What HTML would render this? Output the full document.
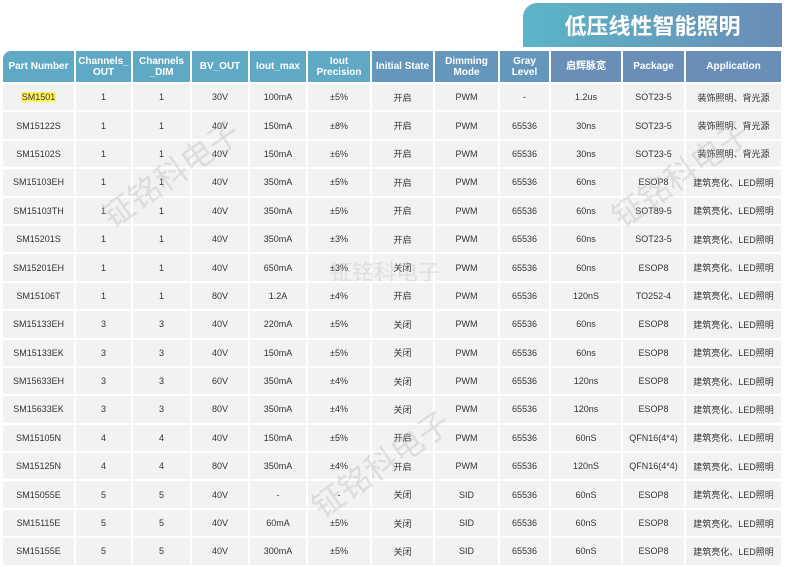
<!DOCTYPE html>
<html><head><meta charset="utf-8"><style>
body{margin:0;width:787px;height:566px;background:#fff;overflow:hidden;position:relative;font-family:"Liberation Sans","Noto Sans CJK SC",sans-serif;}
.title{position:absolute;left:523px;top:3px;width:259px;height:44px;border-radius:14px 0 0 0;background:linear-gradient(90deg,#5bb5c7,#6a8db6);color:#fff;font:bold 22px "Noto Sans CJK SC",sans-serif;line-height:44px;text-align:center;}
table{position:absolute;left:1px;top:49px;border-collapse:separate;border-spacing:2px;table-layout:fixed;}
th{height:31px;padding:0;color:#fff;font-size:10px;font-weight:bold;line-height:11px;background:#5fa9c4;}
td{height:26.4px;padding:0;background:#f1f2f2;font-size:9px;color:#333;text-align:center;}
th:nth-child(n+7){background:#6497bb}
th:nth-child(n+10){background:#6a8fb7}
th:first-child{border-radius:8px 0 0 0}
.hl{background:#fff35a;padding:0 1px}
.wm{position:absolute;color:rgba(180,180,180,.35);font:32px "Noto Sans CJK SC",sans-serif;transform:rotate(-35deg);pointer-events:none}
</style></head><body>
<div class="title">低压线性智能照明</div>
<table>
<colgroup><col style="width:71px"><col style="width:55px"><col style="width:57px"><col style="width:56px"><col style="width:56px"><col style="width:62px"><col style="width:61px"><col style="width:63px"><col style="width:49px"><col style="width:70px"><col style="width:61px"><col style="width:95px"></colgroup>
<tr><th>Part Number</th><th>Channels_<br>OUT</th><th>Channels<br>_DIM</th><th>BV_OUT</th><th>Iout_max</th><th>Iout<br>Precision</th><th>Initial State</th><th>Dimming<br>Mode</th><th>Gray<br>Level</th><th>启辉脉宽</th><th>Package</th><th>Application</th></tr>
<tr><td><span class="hl">SM1501</span></td><td>1</td><td>1</td><td>30V</td><td>100mA</td><td>±5%</td><td>开启</td><td>PWM</td><td>-</td><td>1.2us</td><td>SOT23-5</td><td>装饰照明、背光源</td></tr>
<tr><td>SM15122S</td><td>1</td><td>1</td><td>40V</td><td>150mA</td><td>±8%</td><td>开启</td><td>PWM</td><td>65536</td><td>30ns</td><td>SOT23-5</td><td>装饰照明、背光源</td></tr>
<tr><td>SM15102S</td><td>1</td><td>1</td><td>40V</td><td>150mA</td><td>±6%</td><td>开启</td><td>PWM</td><td>65536</td><td>30ns</td><td>SOT23-5</td><td>装饰照明、背光源</td></tr>
<tr><td>SM15103EH</td><td>1</td><td>1</td><td>40V</td><td>350mA</td><td>±5%</td><td>开启</td><td>PWM</td><td>65536</td><td>60ns</td><td>ESOP8</td><td>建筑亮化、LED照明</td></tr>
<tr><td>SM15103TH</td><td>1</td><td>1</td><td>40V</td><td>350mA</td><td>±5%</td><td>开启</td><td>PWM</td><td>65536</td><td>60ns</td><td>SOT89-5</td><td>建筑亮化、LED照明</td></tr>
<tr><td>SM15201S</td><td>1</td><td>1</td><td>40V</td><td>350mA</td><td>±3%</td><td>开启</td><td>PWM</td><td>65536</td><td>60ns</td><td>SOT23-5</td><td>建筑亮化、LED照明</td></tr>
<tr><td>SM15201EH</td><td>1</td><td>1</td><td>40V</td><td>650mA</td><td>±3%</td><td>关闭</td><td>PWM</td><td>65536</td><td>60ns</td><td>ESOP8</td><td>建筑亮化、LED照明</td></tr>
<tr><td>SM15106T</td><td>1</td><td>1</td><td>80V</td><td>1.2A</td><td>±4%</td><td>开启</td><td>PWM</td><td>65536</td><td>120nS</td><td>TO252-4</td><td>建筑亮化、LED照明</td></tr>
<tr><td>SM15133EH</td><td>3</td><td>3</td><td>40V</td><td>220mA</td><td>±5%</td><td>关闭</td><td>PWM</td><td>65536</td><td>60ns</td><td>ESOP8</td><td>建筑亮化、LED照明</td></tr>
<tr><td>SM15133EK</td><td>3</td><td>3</td><td>40V</td><td>150mA</td><td>±5%</td><td>关闭</td><td>PWM</td><td>65536</td><td>60ns</td><td>ESOP8</td><td>建筑亮化、LED照明</td></tr>
<tr><td>SM15633EH</td><td>3</td><td>3</td><td>60V</td><td>350mA</td><td>±4%</td><td>关闭</td><td>PWM</td><td>65536</td><td>120ns</td><td>ESOP8</td><td>建筑亮化、LED照明</td></tr>
<tr><td>SM15633EK</td><td>3</td><td>3</td><td>80V</td><td>350mA</td><td>±4%</td><td>关闭</td><td>PWM</td><td>65536</td><td>120ns</td><td>ESOP8</td><td>建筑亮化、LED照明</td></tr>
<tr><td>SM15105N</td><td>4</td><td>4</td><td>40V</td><td>150mA</td><td>±5%</td><td>开启</td><td>PWM</td><td>65536</td><td>60nS</td><td>QFN16(4*4)</td><td>建筑亮化、LED照明</td></tr>
<tr><td>SM15125N</td><td>4</td><td>4</td><td>80V</td><td>350mA</td><td>±4%</td><td>开启</td><td>PWM</td><td>65536</td><td>120nS</td><td>QFN16(4*4)</td><td>建筑亮化、LED照明</td></tr>
<tr><td>SM15055E</td><td>5</td><td>5</td><td>40V</td><td>-</td><td>-</td><td>关闭</td><td>SID</td><td>65536</td><td>60nS</td><td>ESOP8</td><td>建筑亮化、LED照明</td></tr>
<tr><td>SM15115E</td><td>5</td><td>5</td><td>40V</td><td>60mA</td><td>±5%</td><td>关闭</td><td>SID</td><td>65536</td><td>60nS</td><td>ESOP8</td><td>建筑亮化、LED照明</td></tr>
<tr><td>SM15155E</td><td>5</td><td>5</td><td>40V</td><td>300mA</td><td>±5%</td><td>关闭</td><td>SID</td><td>65536</td><td>60nS</td><td>ESOP8</td><td>建筑亮化、LED照明</td></tr>
</table>
<div class="wm" style="left:90px;top:150px">钲铭科电子</div>
<div class="wm" style="left:300px;top:440px">钲铭科电子</div>
<div class="wm" style="left:600px;top:150px">钲铭科电子</div>
<div class="wm" style="left:330px;top:255px;transform:none;color:rgba(180,180,180,.3);font-size:22px">钲铭科电子</div>
</body></html>
